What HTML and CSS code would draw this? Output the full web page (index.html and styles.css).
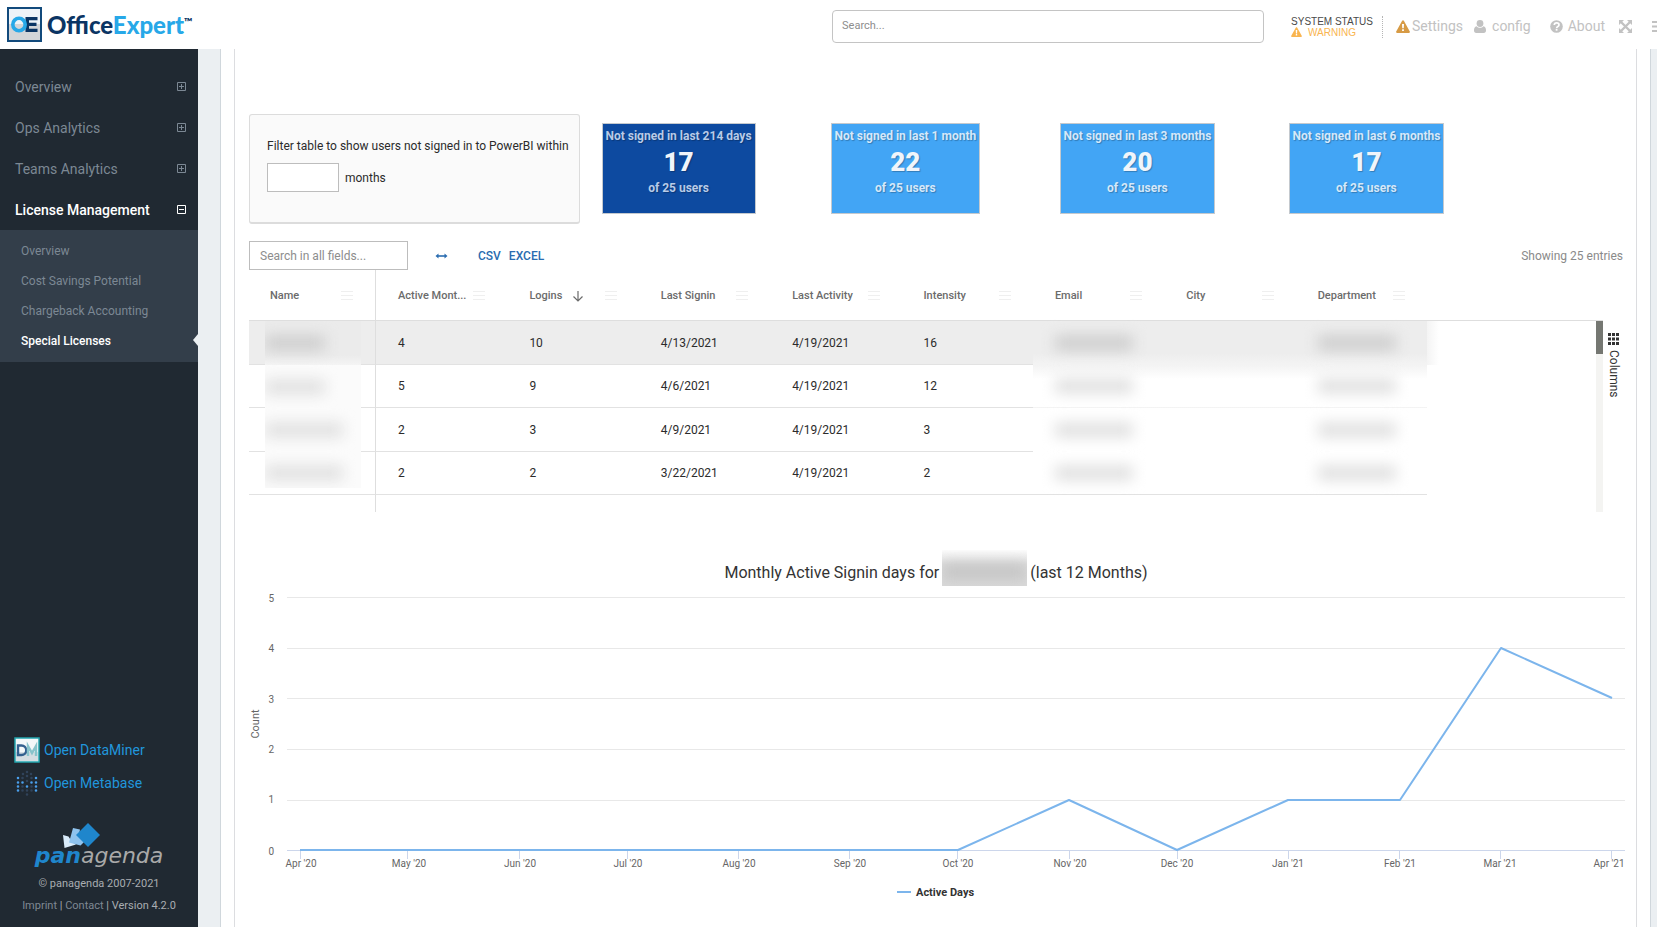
FILE: index.html
```html
<!DOCTYPE html>
<html lang="en">
<head>
<meta charset="utf-8">
<title>OfficeExpert</title>
<link rel="stylesheet" href="styles.css">
</head>
<body>
<svg class="defs" aria-hidden="true">
  <symbol id="warn" viewBox="0 0 14 13"><path d="M7 0.3c.4 0 .8.2 1 .6l5.800 10.600c.4.700 0 1.400-.8 1.400H1c-.8 0-1.200-.7-.8-1.400L6 .9c.2-.4.600-.6 1-.6z" fill="currentColor"/><path d="M6 4h2l-.25 4.300h-1.500zM6.100 9.200h1.800V11H6.100z" fill="#fff"/></symbol>
  <symbol id="plus" viewBox="0 0 9 9"><path d="M.5.5h8v8h-8zM2 4.500h5M4.500 2v5" fill="none" stroke="currentColor"/></symbol>
  <symbol id="minus" viewBox="0 0 9 9"><path d="M.5.5h8v8h-8zM2 4.500h5" fill="none" stroke="currentColor"/></symbol>
  <symbol id="menu" viewBox="0 0 12 9"><path d="M0 .5h12M0 4.500h12M0 8.500h12" fill="none" stroke="currentColor"/></symbol>
</svg>

<header class="topbar">
  <a class="brand" href="#" aria-label="OfficeExpert">
    <svg class="brand-mark" viewBox="0 0 35 35" aria-hidden="true">
      <rect x="1" y="1" width="33" height="33" fill="#eef3f8" stroke="#124a7c" stroke-width="2"/>
      <path d="M2 17h31v16H2z" fill="#d3d5d8"/>
      <path d="M18.500 10H30.500V13.200H22V15.800H29.500V19H22V21.800H30.500V25H18.500z" fill="#0b3564"/>
      <circle cx="12" cy="17.500" r="6.200" fill="none" stroke="#27a8e8" stroke-width="3.600"/>
    </svg>
    <span class="brand-name">Office<span class="brand-accent">Expert</span><sup class="brand-tm">™</sup></span>
  </a>
  <input class="global-search" type="search" placeholder="Search..." aria-label="Search">
  <div class="status">
    <span>SYSTEM STATUS</span>
    <span class="status-value"><svg class="icon-status"><use href="#warn"/></svg>WARNING</span>
  </div>
  <nav class="tools" aria-label="Tools">
    <a class="tool tool-settings" href="#"><svg class="icon-warn"><use href="#warn"/></svg>Settings</a>
    <a class="tool tool-config" href="#"><svg class="icon-user" viewBox="0 0 12 13"><circle cx="6" cy="3.500" r="3.400" fill="currentColor"/><path d="M2.600 6.200C.6 6.600 0 8.500 0 10.500 0 12 .8 13 2.200 13h7.600c1.400 0 2.200-1 2.200-2.500 0-2-.6-3.900-2.600-4.300C8.500 7.200 7.300 7.700 6 7.700s-2.500-.5-3.400-1.500z" fill="currentColor"/></svg>config</a>
    <a class="tool tool-about" href="#"><svg class="icon-help" viewBox="0 0 13 13"><circle cx="6.500" cy="6.500" r="6.300" fill="currentColor"/><path d="M4.300 5C4.300 3.500 5.200 2.900 6.600 2.900S9 3.700 9 4.900C9 6.500 6.600 6.500 6.600 8.200" fill="none" stroke="#fff" stroke-width="1.700"/><path d="M5.700 9h1.800v1.700H5.700z" fill="#fff"/></svg>About</a>
    <button class="tool tool-expand" type="button" aria-label="Full screen"><svg class="icon-help" viewBox="0 0 13 13"><path d="M2 2l9 9M11 2l-9 9" stroke="currentColor" stroke-width="2.400"/><path d="M0 0h5L0 5zM13 0v5L8 0zM0 13V8l5 5zM13 13H8l5-5z" fill="currentColor"/></svg></button>
    <button class="tool tool-menu" type="button" aria-label="Menu"><svg class="icon-bars" viewBox="0 0 14 11"><path d="M0 1h14M0 5.500h14M0 10h14" stroke="currentColor" stroke-width="2"/></svg></button>
  </nav>
</header>

<div class="layout">
  <aside class="sidebar">
    <nav aria-label="Main">
      <ul class="nav">
        <li><a class="nav-link" href="#">Overview<svg class="icon-toggle"><use href="#plus"/></svg></a></li>
        <li><a class="nav-link" href="#">Ops Analytics<svg class="icon-toggle"><use href="#plus"/></svg></a></li>
        <li><a class="nav-link" href="#">Teams Analytics<svg class="icon-toggle"><use href="#plus"/></svg></a></li>
        <li><a class="nav-link is-active" href="#">License Management<svg class="icon-toggle"><use href="#minus"/></svg></a>
          <ul class="subnav">
            <li><a class="subnav-link" href="#">Overview</a></li>
            <li><a class="subnav-link" href="#">Cost Savings Potential</a></li>
            <li><a class="subnav-link" href="#">Chargeback Accounting</a></li>
            <li><a class="subnav-link is-active" href="#">Special Licenses</a></li>
          </ul>
        </li>
      </ul>
    </nav>
    <div class="side-foot">
      <a class="ext-link" href="#">
        <svg class="ext-icon" viewBox="0 0 26 26" aria-hidden="true"><rect x="1" y="1" width="24" height="24" fill="#f3f7f9" stroke="#22a5ae" stroke-width="1.500"/><path d="M2 15h22v9H2z" fill="#d5dde2"/><path d="M4 8.500V18h3.500a4.700 4.700 0 0 0 0-9.500z" fill="none" stroke="#33608f" stroke-width="2.400"/><path d="M14 19V9l4 7 4-7v10" fill="none" stroke="#88c3cb" stroke-width="2.400"/></svg>
        Open DataMiner</a>
      <a class="ext-link" href="#">
        <svg class="ext-icon" viewBox="0 0 26 26" aria-hidden="true">
          <g stroke-width="2.600" stroke-linecap="round" fill="none">
            <path stroke="#30435a" d="M13 2v0M9 4v0M13 6v0M17 4v0M8.500 8v0M17.500 8v0M13 11v0M8.500 16.500v0M17.500 16.500v0M8.500 20.500v0M17.500 20.500v0M13 20.500v0M13 24.500v0"/>
            <path stroke="#4a9fec" d="M4 8v0M22 8v0M4 12.500v0M8.500 12.500v0M17.500 12.500v0M22 12.500v0M4 16.500v0M13 16.500v0M22 16.500v0M4 20.500v0M22 20.500v0"/>
          </g></svg>
        Open Metabase</a>
      <div class="vendor">
        <svg class="vendor-mark" viewBox="0 0 40 26" aria-hidden="true"><path d="M2 12l5.500 1.500L11 19l4 2.500L3.500 25z" fill="#d9ebfa"/><path d="M12 5l7 1.500-1 5 5 7.500-3.500 3.500-11.500-3z" fill="#8fc3ee"/><path d="M27 0l12 12-12 12-12-12z" fill="#1f86cc"/></svg>
        <span class="vendor-name"><b class="vendor-strong">pan</b>agenda</span>
      </div>
      <p class="legal">© panagenda 2007-2021</p>
      <p class="legal"><a class="legal-link" href="#">Imprint</a> | <a class="legal-link" href="#">Contact</a> | Version 4.2.0</p>
    </div>
  </aside>

  <main class="main">
    <div class="page">
      <div class="panel">
        <section class="summary">
          <div class="filter">
            <label for="months">Filter table to show users not signed in to PowerBI within</label>
            <div class="filter-row"><input class="filter-input" id="months" type="text"><span>months</span></div>
          </div>
          <div class="kpi-cell"><div class="kpi is-selected"><span>Not signed in last 214 days</span><strong class="kpi-value">17</strong><span>of 25 users</span></div></div>
          <div class="kpi-cell"><div class="kpi"><span>Not signed in last 1 month</span><strong class="kpi-value">22</strong><span>of 25 users</span></div></div>
          <div class="kpi-cell"><div class="kpi"><span>Not signed in last 3 months</span><strong class="kpi-value">20</strong><span>of 25 users</span></div></div>
          <div class="kpi-cell"><div class="kpi"><span>Not signed in last 6 months</span><strong class="kpi-value">17</strong><span>of 25 users</span></div></div>
        </section>

        <div class="toolbar">
          <input class="table-search" type="search" placeholder="Search in all fields..." aria-label="Search in all fields">
          <button class="text-btn btn-fit" type="button" aria-label="Fit columns"><svg class="icon-fit" viewBox="0 0 12 8"><path d="M2 4h8" stroke="currentColor" stroke-width="1.600"/><path d="M0 4l3-2.500v5zM12 4L9 1.500v5z" fill="currentColor"/></svg></button>
          <button class="text-btn" type="button">CSV</button>
          <button class="text-btn" type="button">EXCEL</button>
          <span class="count">Showing 25 entries</span>
        </div>

        <div class="grid">
          <table class="table">
            <colgroup><col class="col-name"><col span="8"></colgroup>
            <thead>
              <tr>
                <th><div class="th">Name<svg class="icon-menu"><use href="#menu"/></svg></div></th>
                <th><div class="th">Active Mont...<svg class="icon-menu"><use href="#menu"/></svg></div></th>
                <th><div class="th">Logins<svg class="icon-sort" viewBox="0 0 12 12"><path d="M6 1v10M1.500 6.500L6 11l4.500-4.500" fill="none" stroke="currentColor" stroke-width="1.200"/></svg><svg class="icon-menu"><use href="#menu"/></svg></div></th>
                <th><div class="th">Last Signin<svg class="icon-menu"><use href="#menu"/></svg></div></th>
                <th><div class="th">Last Activity<svg class="icon-menu"><use href="#menu"/></svg></div></th>
                <th><div class="th">Intensity<svg class="icon-menu"><use href="#menu"/></svg></div></th>
                <th><div class="th">Email<svg class="icon-menu"><use href="#menu"/></svg></div></th>
                <th><div class="th">City<svg class="icon-menu"><use href="#menu"/></svg></div></th>
                <th><div class="th">Department<svg class="icon-menu"><use href="#menu"/></svg></div></th>
              </tr>
            </thead>
            <tbody>
              <tr class="is-hover"><td class="name"><div class="mask"><i class="blob short"></i></div></td><td>4</td><td>10</td><td>4/13/2021</td><td>4/19/2021</td><td>16</td><td class="hid"><i class="blob"></i></td><td class="hid"></td><td class="hid last"><i class="blob"></i></td></tr>
              <tr class="after-hover"><td class="name"><div class="mask"><i class="blob short"></i></div></td><td>5</td><td>9</td><td>4/6/2021</td><td>4/19/2021</td><td>12</td><td class="hid"><i class="blob"></i></td><td class="hid"></td><td class="hid"><i class="blob"></i></td></tr>
              <tr><td class="name"><div class="mask"><i class="blob"></i></div></td><td>2</td><td>3</td><td>4/9/2021</td><td>4/19/2021</td><td>3</td><td class="hid"><i class="blob"></i></td><td class="hid"></td><td class="hid"><i class="blob"></i></td></tr>
              <tr><td class="name"><div class="mask mask-end"><i class="blob"></i></div></td><td>2</td><td>2</td><td>3/22/2021</td><td>4/19/2021</td><td>2</td><td><i class="blob"></i></td><td></td><td><i class="blob"></i></td></tr>
              <tr class="spare"><td class="name"></td><td colspan="8"></td></tr>
            </tbody>
          </table>
          <div class="grid-rest"><div class="grid-rest-head"></div><div class="scroll"><div class="thumb"></div></div></div>
          <button class="columns" type="button"><svg class="icon-columns" viewBox="0 0 11 12"><path d="M0 0h3v3H0zM4 0h3v3H4zM8 0h3v3H8zM0 4.500h3v3H0zM4 4.500h3v3H4zM8 4.500h3v3H8zM0 9h3v3H0zM4 9h3v3H4zM8 9h3v3H8z" fill="currentColor"/></svg><span class="columns-text">Columns</span></button>
        </div>

        <h2 class="chart-title">Monthly Active Signin days for <span class="title-mask"><i class="blob title-blob"></i></span> (last 12 Months)</h2>
        <svg class="chart" viewBox="0 0 1374 320" role="img" aria-label="Monthly active signin days">
          <path class="gridline" d="M38 11.500H1376M38 62.500H1376M38 112.500H1376M38 163.500H1376M38 214.500H1376"/>
          <path class="axis" d="M38 264.500H1376M51.500 264v9M158.500 264v9M270.500 264v9M378.500 264v9M489.500 264v9M600.500 264v9M708.500 264v9M820.500 264v9M928.500 264v9M1039.500 264v9M1150.500 264v9M1251.500 264v9M1362.500 264v9"/>
          <path class="series" d="M51 264L709 264L820 214L928 264L1039 214L1151 214L1252 62L1363 112"/>
          <g class="tick y-tick">
            <text x="25" y="16">5</text><text x="25" y="66">4</text><text x="25" y="117">3</text><text x="25" y="167">2</text><text x="25" y="217">1</text><text x="25" y="269">0</text>
          </g>
          <g class="tick x-tick">
            <text x="52" y="281">Apr '20</text><text x="160" y="281">May '20</text><text x="271" y="281">Jun '20</text><text x="379" y="281">Jul '20</text><text x="490" y="281">Aug '20</text><text x="601" y="281">Sep '20</text><text x="709" y="281">Oct '20</text><text x="821" y="281">Nov '20</text><text x="928" y="281">Dec '20</text><text x="1039" y="281">Jan '21</text><text x="1151" y="281">Feb '21</text><text x="1251" y="281">Mar '21</text><text x="1360" y="281">Apr '21</text>
          </g>
          <text class="axis-title" transform="translate(10 138) rotate(-90)">Count</text>
          <path class="series" d="M648 306h14"/>
          <text class="legend" x="667" y="310">Active Days</text>
        </svg>
      </div>
    </div>
  </main>
</div>
</body>
</html>
```
FILE: styles.css
```css
* { box-sizing: border-box; }
body {
  margin: 0;
  font-family: Roboto, "Liberation Sans", sans-serif;
  font-size: 12px;
  line-height: 16px;
  color: #2b2b2b;
  background: #fff;
  overflow-x: hidden;
}
a { color: inherit; text-decoration: none; }
button { padding: 0; border: 0; background: none; font: inherit; color: inherit; cursor: pointer; }
input { font: inherit; color: inherit; }
ul { margin: 0; padding: 0; list-style: none; }
svg { flex: none; display: block; }
.defs { position: absolute; width: 0; height: 0; }

/* Top bar */
.topbar { display: flex; align-items: center; height: 49px; padding-left: 7px; overflow: hidden; }
.brand { display: flex; align-items: center; gap: 5px; margin-right: auto; }
.brand-mark { width: 35px; height: 35px; }
.brand-name { font: 900 24px/35px Lato, sans-serif; color: #0b3564; }
.brand-accent { color: #27a8e8; }
.brand-tm { font-size: 11px; line-height: 11px; vertical-align: 8px; }
.global-search { width: 432px; height: 33px; margin: 4px 27px 0 0; padding: 0 9px 3px; border: 1px solid #c4c4c4; border-radius: 4px; font-size: 11px; }
::placeholder { color: #8d8d8d; opacity: 1; }
.status { display: flex; flex-direction: column; margin-top: 5px; padding-right: 9px; border-right: 1px dotted #b5b5b5; font: 10px/11px "Liberation Sans", Arial, sans-serif; color: #4a4a4a; white-space: nowrap; }
.status-value { display: flex; gap: 6px; color: #f9b550; }
.icon-status { width: 11px; height: 10px; }
.tools { display: flex; align-items: center; height: 49px; margin-right: -9px; padding-top: 3px; font-size: 14px; color: #c2c2c2; }
.tool { display: flex; align-items: center; }
.tool-settings { gap: 2px; margin-left: 13px; }
.tool-config { gap: 6px; margin-left: 11px; }
.tool-about { gap: 5px; margin-left: 19px; }
.tool-expand { margin-left: 14px; }
.tool-menu { margin-left: 20px; }
.icon-warn { width: 14px; height: 13px; color: #d79b45; }
.icon-user { width: 12px; height: 13px; }
.icon-help { width: 13px; height: 13px; }
.icon-bars { width: 14px; height: 11px; }

/* Page frame */
.layout { display: flex; min-height: calc(100vh - 49px); }
.sidebar { flex: none; display: flex; flex-direction: column; width: 198px; background: #202932; }
.main { flex: 1; display: flex; min-width: 0; padding: 0 6px 0 22px; background: #ebeff2; }
.page { flex: 1; display: flex; min-width: 0; padding: 0 13px; border: solid #d0d7dc; border-width: 0 1px; background: #fff; }
.panel { flex: 1; min-width: 0; padding: 65px 13px 0 14px; border: solid #dcdde0; border-width: 0 1px; }

/* Sidebar */
.nav { padding-top: 17px; }
.nav-link { display: flex; align-items: center; justify-content: space-between; height: 41px; padding: 0 12px 0 15px; font-size: 14px; color: #7c8894; }
.nav-link.is-active { color: #fff; font-weight: 500; }
.icon-toggle { width: 9px; height: 9px; }
.subnav { padding: 6px 0; background: #333e4a; }
.subnav-link { position: relative; display: flex; align-items: center; height: 30px; padding-left: 21px; color: #7c8894; }
.subnav-link.is-active { color: #fff; font-weight: 500; }
.subnav-link.is-active::after { content: ""; position: absolute; right: 0; top: 8px; border: 6px solid transparent; border-right: 5px solid #ebeff2; border-left: 0; }
.side-foot { display: flex; flex-direction: column; margin-top: auto; padding-bottom: 10px; }
.ext-link { display: flex; align-items: center; gap: 4px; height: 33px; padding-left: 14px; font-size: 14px; color: #2196dc; }
.ext-icon { width: 26px; height: 26px; }
.vendor { display: flex; flex-direction: column; align-items: center; margin: 24px 0 4px; }
.vendor-mark { width: 40px; height: 26px; margin-right: 36px; }
.vendor-name { margin-top: -6px; font: italic 22px/26px "DejaVu Sans", sans-serif; color: #a9a9a9; }
.vendor-strong { color: #1f86cc; }
.legal { margin: 0; font-size: 11px; line-height: 22px; text-align: center; color: #a9adb1; }
.legal-link { color: #7f8893; }

/* Filter and key figures */
.summary { display: grid; grid-template-columns: minmax(0, 3fr) repeat(3, minmax(0, 2fr)) minmax(0, 3fr); }
.filter { height: 110px; margin-right: 13px; padding: 23px 0 0 17px; border: 1px solid #dcdcdc; border-bottom-width: 2px; border-radius: 3px; background: #fafafa; white-space: nowrap; }
.filter-row { display: flex; align-items: center; gap: 6px; margin-top: 9px; }
.filter-input { width: 72px; height: 29px; border: 1px solid #bdbdbd; background: #fff; }
.kpi-cell { padding: 9px 0 0 9px; }
.kpi { display: inline-flex; flex-direction: column; align-items: center; height: 91px; padding: 4px 3px; border: 1px solid #c4c9ce; background: #42a5f5; font-weight: 700; color: #d5e8fa; text-shadow: 1px 1px 1px rgba(0, 0, 0, .25); white-space: nowrap; }
.kpi.is-selected { background: #0d4aa0; color: #b8cbe8; }
.kpi-value { margin: 1px 0; font-size: 26px; line-height: 34px; color: #f0f5fb; }

/* Table toolbar */
.toolbar { display: flex; align-items: center; margin-top: 17px; }
.table-search { width: 159px; height: 29px; padding: 0 10px; border: 1px solid #bdbdbd; }
.text-btn { margin-right: 8px; font-weight: 500; color: #2a6cb0; }
.btn-fit { margin: 0 30px 0 27px; }
.icon-fit { width: 13px; height: 8px; }
.count { margin-left: auto; color: #8a8a8a; }

/* Table */
.grid { display: flex; }
.table { flex: none; width: 1178px; table-layout: fixed; border-spacing: 0; }
.col-name { width: 127px; }
.table th { height: 51px; padding: 1px 22px 0; border-bottom: 1px solid #dedede; font-size: 11px; font-weight: 500; text-align: left; color: #6b6b6b; white-space: nowrap; }
.table th:first-child { padding-left: 21px; border-right: 1px solid #dedede; }
.th { display: flex; align-items: center; }
.icon-menu { width: 12px; height: 9px; margin-left: auto; color: #efefef; }
.icon-sort { width: 12px; height: 12px; margin-left: 10px; color: #6b6b6b; }
.table td { height: 43px; padding: 0 22px; border-bottom: 1px solid #e2e2e2; }
.table tr:nth-child(odd) td { height: 44px; }
.table .name { padding: 0 14px 0 16px; border-right: 1px solid #dedede; }
.is-hover td { background: #ededed; }
.table .hid { border-bottom-color: transparent; }
.is-hover .hid { border-bottom-color: #f3f3f3; background: linear-gradient(#ededed 32px, #f3f3f3); }
.after-hover .hid { background: linear-gradient(#f3f3f3, #fff 14px); }
.table .last { position: relative; }
.last::after { content: ""; position: absolute; left: 100%; top: 0; width: 12px; height: 44px; background: linear-gradient(90deg, #f4f4f4, #fff); }
.table tr.spare td { height: 17px; border-bottom: 0; }
.mask { display: flex; align-items: center; height: 44px; margin-bottom: -1px; background: #fbfbfb; overflow: hidden; }
.is-hover .mask { background: linear-gradient(#ebebeb 34px, #f4f4f4); }
.after-hover .mask { height: 43px; }
.mask-end { height: 36px; margin: 0 0 6px; padding-top: 6px; }
.blob { display: block; width: 78px; height: 16px; background: #e2e2e2; filter: blur(7px); }
.is-hover .blob { background: #cfcfcf; }
.short { width: 60px; }
.grid-rest { flex: 1; display: flex; flex-direction: column; }
.grid-rest-head { height: 51px; border-bottom: 1px solid #dedede; }
.scroll { flex: 1; width: 7px; margin-left: auto; background: #f4f4f2; }
.thumb { height: 33px; background: #757772; }
.columns { display: flex; flex-direction: column; align-items: flex-start; gap: 5px; width: 20px; padding: 63px 0 0 4px; color: #333; }
.icon-columns { width: 11px; height: 12px; margin-left: 1px; }
.columns-text { line-height: 14px; writing-mode: vertical-rl; }

/* Chart */
.chart-title { display: flex; align-items: flex-end; justify-content: center; gap: 3px; margin: 38px 0 0; font-size: 16px; line-height: 26px; font-weight: 400; color: #333; white-space: nowrap; }
.title-mask { display: flex; align-items: center; width: 85px; height: 36px; background: linear-gradient(#fcfcfc, #dedede 40%, #dadada); overflow: hidden; }
.title-blob { width: 85px; margin-top: 8px; background: #c4c4c4; }
.chart { width: 100%; height: auto; overflow: visible; }
.gridline { fill: none; stroke: #e8e8e8; }
.axis { fill: none; stroke: #ccd6eb; }
.series { fill: none; stroke: #7cb5ec; stroke-width: 2; stroke-linejoin: round; }
.tick { font-size: 10px; fill: #666; }
.y-tick { text-anchor: end; }
.x-tick { text-anchor: middle; }
.axis-title { font-size: 11px; fill: #666; text-anchor: middle; }
.legend { font-size: 11px; font-weight: 700; fill: #333; }
```
